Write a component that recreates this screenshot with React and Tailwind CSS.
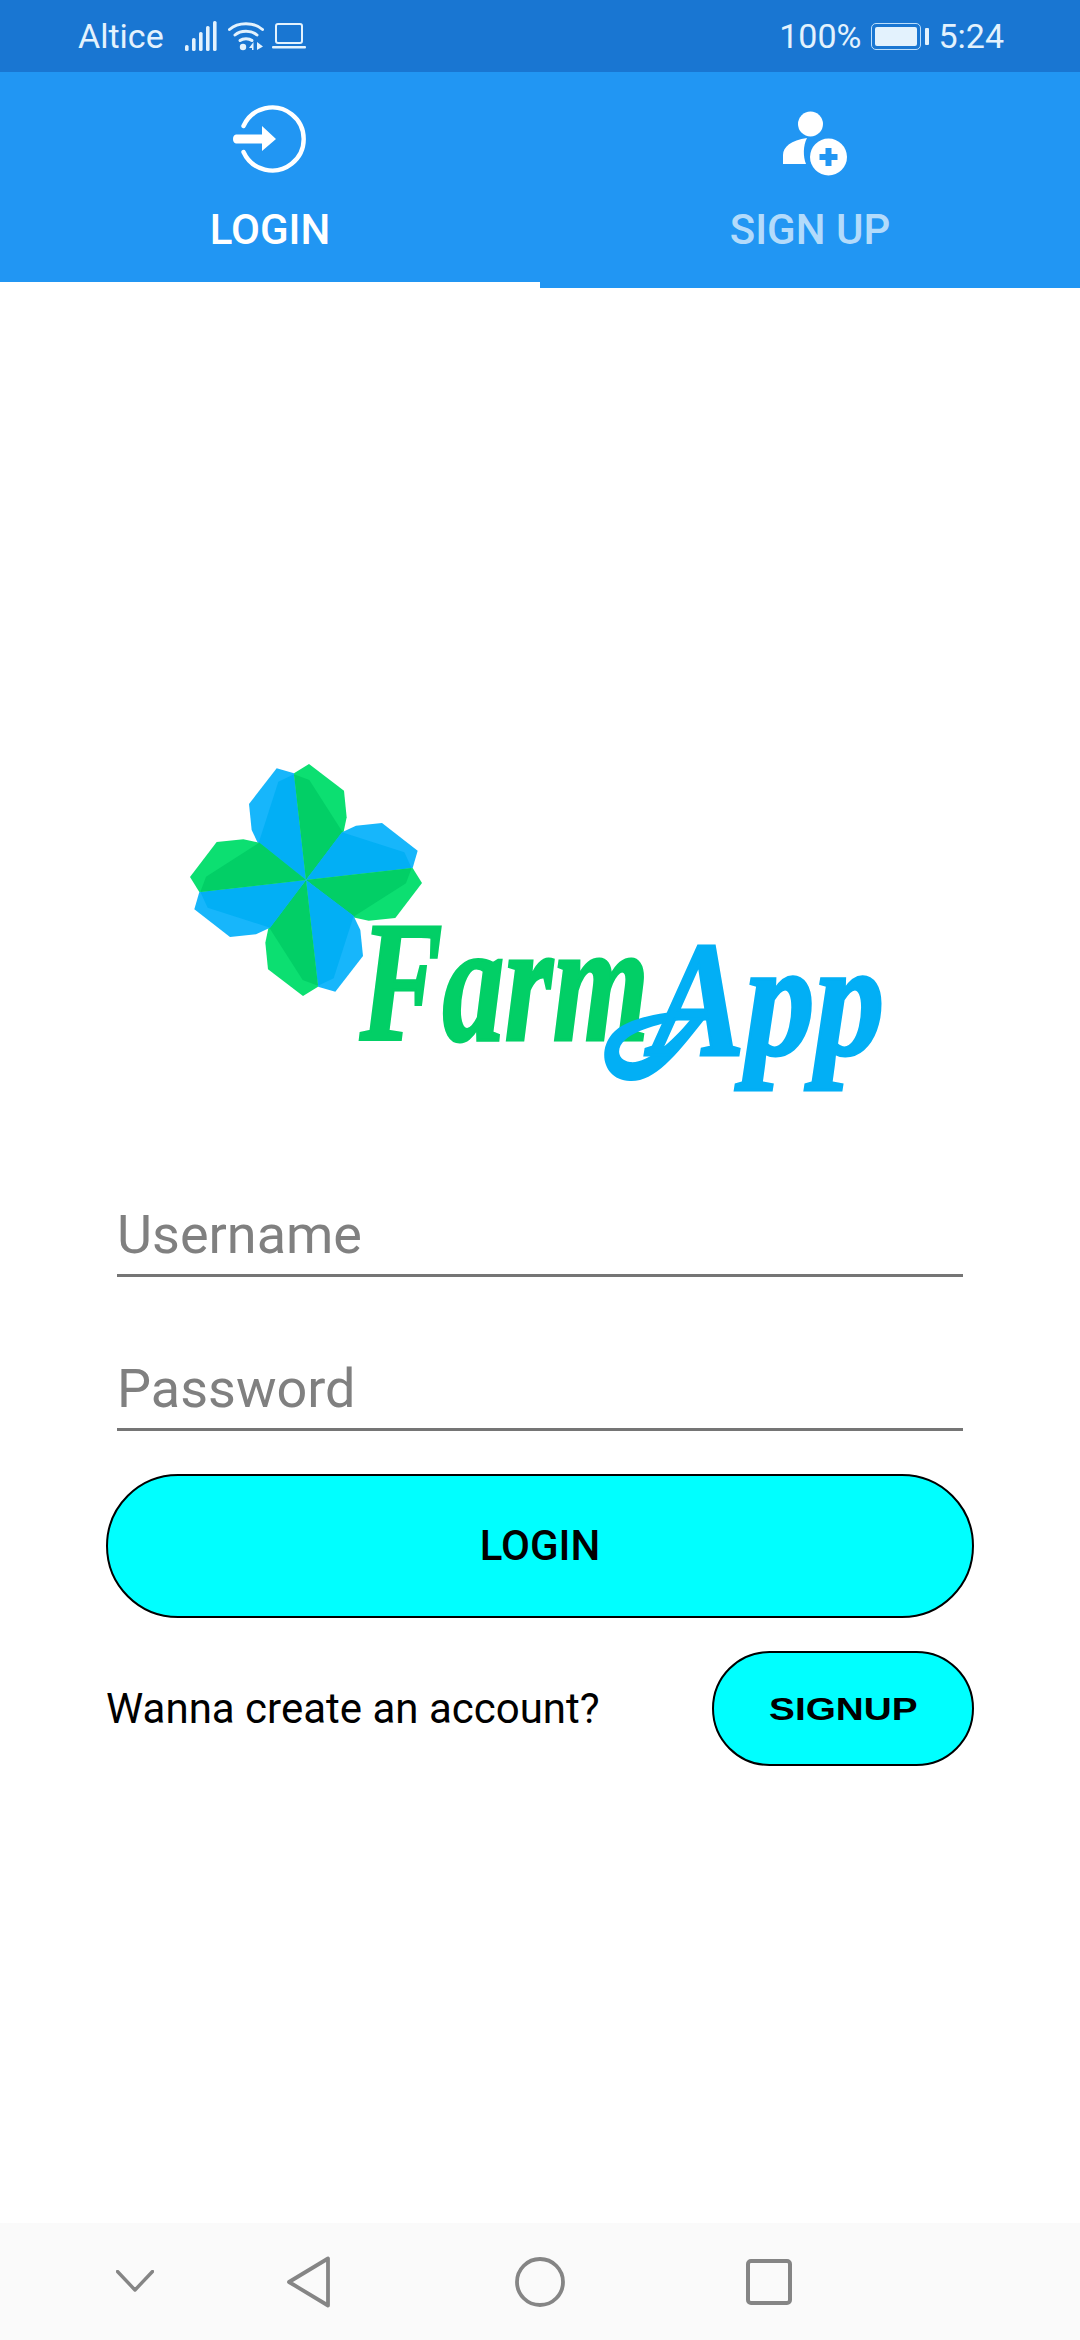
const roboto = { fontFamily: "Roboto, sans-serif" };

function Signal() {
  const bars = [[0, 24, 6], [7, 17, 13], [14, 11, 19], [21, 5, 25], [28, 0, 30]];
  return (
    <svg width="32" height="30" viewBox="0 0 32 30" className="block shrink-0">
      {bars.map(([x, y, h]) => (
        <rect key={x} x={x} y={y} width="3.6" height={h} rx="1.6" fill="#e3f2fd" />
      ))}
    </svg>
  );
}

function Wifi() {
  return (
    <svg width="36" height="30" viewBox="0 0 36 30" fill="none" className="block shrink-0">
      <path d="M1.5 8.5C10 0.8 26 0.8 34.5 8.5" stroke="#e3f2fd" strokeWidth="3" strokeLinecap="round" />
      <path d="M7 14C12.5 9 23.5 9 29 14" stroke="#e3f2fd" strokeWidth="3" strokeLinecap="round" />
      <path d="M12 19.5C15 17 21 17 24 19.5" stroke="#e3f2fd" strokeWidth="3" strokeLinecap="round" />
      <circle cx="15" cy="26" r="3.2" fill="#e3f2fd" />
      <path d="M21 27L25.5 21V29H24V27Z" fill="#e3f2fd" />
      <path d="M29 21L35 25.5L29 29Z" fill="#e3f2fd" />
    </svg>
  );
}

function Laptop() {
  return (
    <svg width="34" height="26" viewBox="0 0 34 26" fill="none" className="block shrink-0">
      <rect x="4" y="1" width="26" height="19" rx="2" stroke="#e3f2fd" strokeWidth="2" />
      <rect x="0" y="23" width="34" height="2.4" rx="1" fill="#e3f2fd" />
    </svg>
  );
}

function Battery() {
  return (
    <div className="flex items-center shrink-0">
      <div className="w-[50px] h-[27px] rounded-[5px] border-[1.5px] border-[#bbdefb] p-[3px]">
        <div className="w-full h-full bg-[#e3f2fd] rounded-[2px]" />
      </div>
      <div className="w-[4px] h-[17px] bg-[#e3f2fd] ml-[4px] rounded-[1px]" />
    </div>
  );
}

function LoginIcon() {
  return (
    <svg width="74" height="68" viewBox="0 0 74 68" fill="none" className="block">
      <path d="M10.5 21A31.5 31.5 0 1 1 10.5 47" stroke="#fff" strokeWidth="4.4" strokeLinecap="round" />
      <path d="M3 29.5H29V21L43 34L29 46V38.5H3C-1 38.5 -1 29.5 3 29.5Z" fill="#fff" />
    </svg>
  );
}

function SignupIcon() {
  return (
    <svg width="66" height="66" viewBox="0 0 66 66" className="block">
      <circle cx="27.5" cy="13" r="12.5" fill="#fff" />
      <path d="M0 53V44C0 36 8 29 24 27C20 35 20 45 23 53Z" fill="#fff" />
      <circle cx="45.5" cy="46" r="18.5" fill="#fff" />
      <path d="M42.5 37H48.5V43H54.5V49H48.5V55H42.5V49H36.5V43H42.5Z" fill="#2196f3" />
    </svg>
  );
}

function Petal({ angle }) {
  return (
    <g transform={`rotate(${angle} 408 420)`}>
      <polygon points="372,100 320,85 237,192 245,270 265,312 408,420" fill="#17b6fb" />
      <polygon points="408,420 372,103 325,125 265,312" fill="#02aff5" />
      <polygon points="372,100 417,72 522,152 530,232 520,280 408,420" fill="#0cdf71" />
      <polygon points="408,420 372,103 418,120 520,280" fill="#02cf66" />
    </g>
  );
}

function Clover() {
  return (
    <svg width="280" height="280" viewBox="0 0 840 840" className="block">
      {[0, 90, 180, 270].map((a) => (
        <Petal key={a} angle={a} />
      ))}
    </svg>
  );
}

function NavIcons() {
  return (
    <div className="h-[117px] bg-[#fafafa] flex items-center pl-[116px]">
      <svg width="38" height="22" viewBox="0 0 38 22" fill="none" className="block shrink-0 -mt-[2px]">
        <path d="M1.5 1.5L19 20L36.5 1.5" stroke="#858585" strokeWidth="3.4" strokeLinecap="round" strokeLinejoin="round" />
      </svg>
      <svg width="44" height="52" viewBox="0 0 44 52" fill="none" className="block shrink-0 ml-[133px]">
        <path d="M41 2.5V49.5L2 26Z" stroke="#858585" strokeWidth="3.8" strokeLinejoin="round" />
      </svg>
      <svg width="50" height="50" viewBox="0 0 50 50" fill="none" className="block shrink-0 ml-[184px]">
        <circle cx="25" cy="25" r="23" stroke="#858585" strokeWidth="3.8" />
      </svg>
      <svg width="46" height="46" viewBox="0 0 46 46" fill="none" className="block shrink-0 ml-[181px]">
        <rect x="2" y="2" width="42" height="42" rx="3" stroke="#858585" strokeWidth="4" />
      </svg>
    </div>
  );
}

export default function App() {
  return (
    <div className="w-[1080px] h-[2340px] bg-white flex flex-col overflow-hidden" style={roboto}>
      <div className="h-[72px] shrink-0 bg-[#1976d2] flex items-center pl-[78px] pr-[76px] text-[34px] text-[#e3f2fd]">
        <span className="leading-none">Altice</span>
        <div className="ml-[21px] flex items-center">
          <Signal />
          <div className="ml-[11px]"><Wifi /></div>
          <div className="ml-[8px]"><Laptop /></div>
        </div>
        <div className="ml-auto flex items-center">
          <span className="leading-none">100%</span>
          <div className="ml-[10px]"><Battery /></div>
          <span className="leading-none ml-[9px]">5:24</span>
        </div>
      </div>

      <div className="grid grid-cols-2 h-[216px] shrink-0 bg-[#2196f3]">
        <div className="flex flex-col items-center border-b-[6px] border-white pt-[33px]">
          <LoginIcon />
          <span className="mt-[36px] leading-none text-[42px] font-medium text-white">LOGIN</span>
        </div>
        <div className="flex flex-col items-center pt-[39px]">
          <div className="ml-[12px]"><SignupIcon /></div>
          <span className="mt-[32px] leading-none text-[42px] font-medium text-[#b3dbfb]">SIGN UP</span>
        </div>
      </div>

      <div className="flex-1 flex flex-col">
        <div className="relative h-[400px] mt-[452px] shrink-0">
          <div className="ml-[170px]"><Clover /></div>
          <span
            className="absolute left-[360px] top-[156px] leading-none text-[172px] font-bold italic text-[#02cf66] [-webkit-text-stroke:3px_#02cf66] origin-left scale-x-[0.72]"
            style={{ fontFamily: '"Liberation Serif", serif' }}
          >
            Farm
          </span>
          <svg width="110" height="90" viewBox="0 0 110 90" className="absolute left-[600px] top-[260px]">
            <path
              d="M95 10C60 12 26 18 12 34C-3 52 4 80 30 81C54 82 74 58 104 20L90 20C70 44 46 64 30 62C17 60 16 48 25 40C37 29 65 22 95 17Z"
              fill="#02aff5"
            />
          </svg>
          <span
            className="absolute left-[652px] top-[176px] leading-none text-[166px] font-bold italic text-[#02aff5] [-webkit-text-stroke:3px_#02aff5] origin-left scale-x-[0.84]"
            style={{ fontFamily: '"Liberation Serif", serif' }}
          >
            App
          </span>
        </div>

        <div className="mx-[117px] w-[846px] mt-[73px]">
          <div className="h-[64px] border-b-[3px] border-[#757575] text-[54px] leading-[44px] text-[#808080]">Username</div>
          <div className="h-[64px] mt-[90px] border-b-[3px] border-[#757575] text-[54px] leading-[44px] text-[#808080]">Password</div>
        </div>

        <div className="mx-[106px] w-[868px] mt-[43px] h-[144px] bg-[#00ffff] border-2 border-black rounded-[72px] flex items-center justify-center text-[42px] font-medium text-black leading-none">
          LOGIN
        </div>

        <div className="mx-[106px] w-[868px] mt-[33px] flex items-center justify-between">
          <span className="text-[42px] leading-none text-black">Wanna create an account?</span>
          <div className="w-[262px] h-[115px] bg-[#00ffff] border-2 border-black rounded-[58px] flex items-center justify-center">
            <span
              className="text-[32px] leading-none font-bold text-black scale-x-[1.21]"
              style={{ fontFamily: '"Liberation Sans", sans-serif' }}
            >
              SIGNUP
            </span>
          </div>
        </div>
      </div>

      <NavIcons />
    </div>
  );
}
